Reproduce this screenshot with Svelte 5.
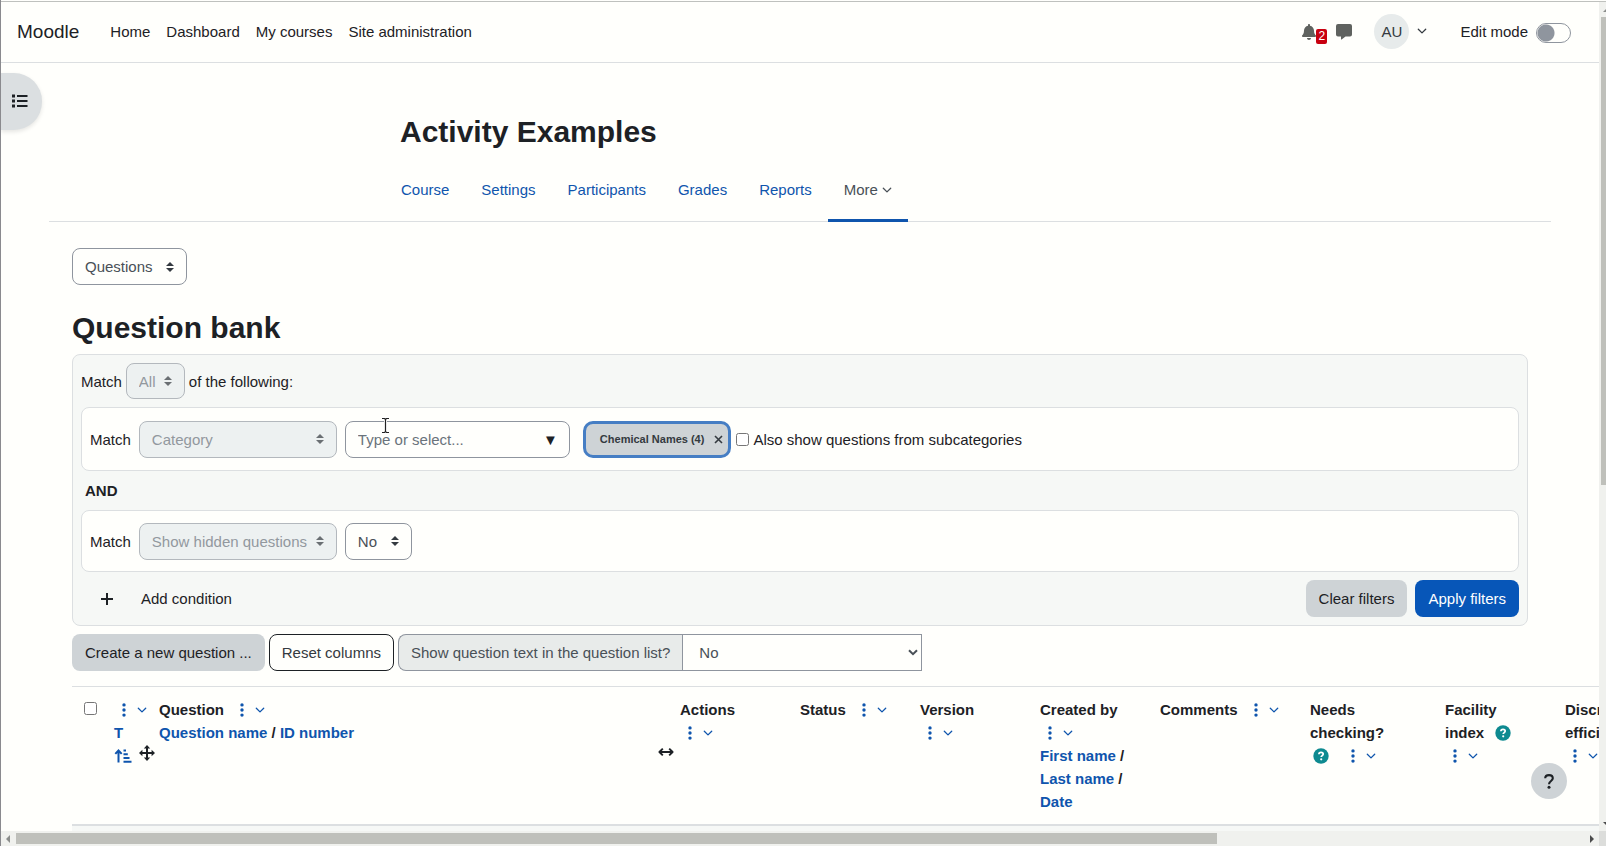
<script>
  const nav = ['Home', 'Dashboard', 'My courses', 'Site administration'];
  const tabs = ['Course', 'Settings', 'Participants', 'Grades', 'Reports'];

  // Each heading is a list of lines; each line is a list of parts.
  const t = (text) => ({ kind: 'text', text });
  const link = (text) => ({ kind: 'link', text });
  const menu = { kind: 'menu' };
  const help = { kind: 'help' };

  const columns = [
    { id: 'type', width: 45, lines: [[menu], [link('T')], [{ kind: 'sort' }]], move: true },
    {
      id: 'question',
      width: 521,
      lines: [[t('Question'), menu], [{ kind: 'links', items: ['Question name', 'ID number'] }]],
      resize: true
    },
    { id: 'actions', width: 120, lines: [[t('Actions')], [menu]] },
    { id: 'status', width: 120, lines: [[t('Status'), menu]] },
    { id: 'version', width: 120, lines: [[t('Version')], [menu]] },
    {
      id: 'created',
      width: 120,
      lines: [
        [t('Created by')],
        [menu],
        [{ kind: 'links', items: ['First name', ''] }],
        [{ kind: 'links', items: ['Last name', ''] }],
        [link('Date')]
      ]
    },
    { id: 'comments', width: 150, lines: [[t('Comments'), menu]] },
    { id: 'needs', width: 135, lines: [[t('Needs')], [t('checking?')], [help, menu]] },
    { id: 'facility', width: 120, lines: [[t('Facility')], [t('index'), help], [menu]] },
    { id: 'discr', width: 120, lines: [[t('Discriminative')], [t('efficiency'), help], [menu]] }
  ];
</script>

{#snippet chevron(cls)}
  <svg class={cls} width="10" height="10" viewBox="0 0 10 10" aria-hidden="true">
    <path d="M1.3 3.2 5 6.9 8.7 3.2" fill="none" stroke="currentColor" stroke-width="1.3" stroke-linecap="round" stroke-linejoin="round" />
  </svg>
{/snippet}

{#snippet picker(label, options, disabled, cls)}
  <span class="picker {cls}" class:off={disabled}>
    <select aria-label={label} {disabled}>
      {#each options as o}<option>{o}</option>{/each}
    </select>
    <svg width="8" height="10" viewBox="0 0 8 10" aria-hidden="true">
      <path d="M4 0 8 4H0zM4 10 8 6H0z" fill="currentColor" />
    </svg>
  </span>
{/snippet}

<div class="window">
  <div class="view">
    <header>
      <a class="brand" href="#home">Moodle</a>
      <nav aria-label="Site">
        {#each nav as item}<a href="#{item}">{item}</a>{/each}
      </nav>
      <div class="tools">
        <button class="plain bell" aria-label="Notifications, 2 unread">
          <svg width="14" height="16" viewBox="0 0 448 512" aria-hidden="true">
            <path fill="currentColor" d="M224 512c35.3 0 64-28.6 64-64H160c0 35.400 28.700 64 64 64zM439.400 362.300c-19.300-20.800-55.500-52-55.500-154.300 0-77.700-54.500-139.900-127.900-155.200V32c0-17.700-14.300-32-32-32s-32 14.300-32 32v20.800C118.600 68.100 64.100 130.300 64.100 208c0 102.300-36.200 133.500-55.500 154.300C2.600 368.700 0 376.400 0 384c.1 16.400 13 32 32.100 32h383.800c19.100 0 32-15.600 32.100-32 0-7.600-2.600-15.300-8.600-21.700z" />
          </svg>
          <span class="count">2</span>
        </button>
        <button class="plain chat" aria-label="Messages">
          <svg width="16" height="16" viewBox="0 0 16 16" aria-hidden="true">
            <path fill="currentColor" d="M2 0h12a2 2 0 0 1 2 2v8.500a2 2 0 0 1-2 2H9.500L5.600 15.500c-.3.200-.6 0-.6-.3v-2.700H2a2 2 0 0 1-2-2V2a2 2 0 0 1 2-2z" />
          </svg>
        </button>
        <button class="plain user" aria-label="User menu">
          <span class="avatar">AU</span>
          {@render chevron('')}
        </button>
        <label class="edit">Edit mode <input type="checkbox" role="switch" /></label>
      </div>
    </header>

    <button class="drawer" aria-label="Open course index">
      <svg width="16" height="14" viewBox="0 0 16 14" aria-hidden="true">
        <path fill="currentColor" d="M0 .5h3v3H0zM0 5.500h3v3H0zM0 10.500h3v3H0zM5 1h10.500v2H5zM5 6h10.500v2H5zM5 11h10.500v2H5z" />
      </svg>
    </button>

    <main>
      <div class="course">
        <div class="narrow">
          <h1>Activity Examples</h1>
          <nav class="tabs" aria-label="Course">
            {#each tabs as tab}<a href="#{tab}">{tab}</a>{/each}
            <a class="active" href="#more">More {@render chevron('')}</a>
          </nav>
        </div>
      </div>

      <div class="content">
        {@render picker('Question bank navigation', ['Questions'], false, 'jump')}
        <h2>Question bank</h2>

        <section class="filters" aria-label="Filters">
          <div class="join">
            Match {@render picker('Join type', ['All'], true, 'all')} of the following:
          </div>
          <div class="rule first">
            <span class="match">Match</span>
            {@render picker('Filter', ['Category'], true, 'type')}
            <span class="combo">
              <input type="text" placeholder="Type or select..." aria-label="Category" />
              <span class="down" aria-hidden="true">▼</span>
            </span>
            <button class="chip">Chemical Names (4)
              <svg width="9" height="9" viewBox="0 0 9 9" aria-hidden="true">
                <path d="M1 1l7 7M8 1 1 8" stroke="currentColor" stroke-width="1.6" />
              </svg>
            </button>
            <label class="sub"><input type="checkbox" />Also show questions from subcategories</label>
          </div>
          <div class="and">AND</div>
          <div class="rule">
            <span class="match">Match</span>
            {@render picker('Filter', ['Show hidden questions'], true, 'type')}
            {@render picker('Show hidden questions', ['No'], false, 'no')}
          </div>
          <div class="foot">
            <button class="plain add">
              <svg width="12" height="12" viewBox="0 0 12 12" aria-hidden="true">
                <path d="M6 0v12M0 6h12" stroke="currentColor" stroke-width="2" />
              </svg>
              Add condition
            </button>
            <span class="actions">
              <button class="btn grey">Clear filters</button>
              <button class="btn blue">Apply filters</button>
            </span>
          </div>
        </section>

        <div class="bar">
          <button class="btn grey">Create a new question ...</button>
          <button class="btn line">Reset columns</button>
          <div class="group">
            <label for="qtext">Show question text in the question list?</label>
            <span class="long">
              <select id="qtext"><option>No</option></select>
              <svg width="10" height="7" viewBox="0 0 10 7" aria-hidden="true">
                <path d="M1 1.200 5 5.200 9 1.200" fill="none" stroke="currentColor" stroke-width="2" />
              </svg>
            </span>
          </div>
        </div>

        <table>
          <colgroup>
            <col style="width:30px" />
            {#each columns as c}<col style="width:{c.width}px" />{/each}
          </colgroup>
          <thead>
            <tr>
              <th class="check"><input type="checkbox" aria-label="Select all" /></th>
              {#each columns as c (c.id)}
                <th>
                  {#each c.lines as line}
                    <div class="ln">
                      {#each line as p}
                        {#if p.kind === 'text'}
                          <span>{p.text}</span>
                        {:else if p.kind === 'link'}
                          <a href="#sort">{p.text}</a>
                        {:else if p.kind === 'links'}
                          <span><a href="#sort">{p.items[0]}</a> / {#if p.items[1]}<a href="#sort">{p.items[1]}</a>{/if}</span>
                        {:else if p.kind === 'menu'}
                          <button class="plain menu" aria-label="Column actions">
                            <svg width="4" height="14" viewBox="0 0 4 14" aria-hidden="true">
                              <path fill="currentColor" d="M2 .2a1.700 1.700 0 1 1 0 3.400 1.700 1.700 0 0 1 0-3.400zM2 5.300a1.700 1.700 0 1 1 0 3.400 1.700 1.700 0 0 1 0-3.400zM2 10.400a1.700 1.700 0 1 1 0 3.400 1.700 1.700 0 0 1 0-3.400z" />
                            </svg>
                            {@render chevron('')}
                          </button>
                        {:else if p.kind === 'help'}
                          <button class="plain help" aria-label="Help">
                            <svg width="16" height="16" viewBox="0 0 16 16" aria-hidden="true">
                              <circle cx="8" cy="8" r="7.700" fill="#0e8a90" />
                              <path d="M5.900 6.200C5.900 5 6.800 4.300 8 4.300s2.200.7 2.200 1.800c0 1.500-2 1.500-2 3" fill="none" stroke="#fff" stroke-width="1.700" />
                              <circle cx="8.200" cy="11.300" r="1.100" fill="#fff" />
                            </svg>
                          </button>
                        {:else}
                          <a href="#sort" class="sort" aria-label="Sort ascending">
                            <svg width="18" height="14" viewBox="0 0 18 14" aria-hidden="true">
                              <path d="M4.500 13.500V2M1.300 4.900 4.500 1.500 7.700 4.900" fill="none" stroke="currentColor" stroke-width="2" />
                              <path d="M9.500 1.500h2.500M9.500 5.200h4.300M9.500 8.900h6M9.500 12.700h8" stroke="currentColor" stroke-width="2" />
                            </svg>
                          </a>
                        {/if}
                      {/each}
                    </div>
                  {/each}
                  {#if c.move}
                    <svg class="handle move" width="16" height="16" viewBox="0 0 16 16" aria-hidden="true">
                      <path d="M8 2v12M2 8h12" stroke="currentColor" stroke-width="2" />
                      <path d="M8 0l3.200 3.400H4.800zM8 16l3.200-3.400H4.800zM0 8l3.400-3.200v6.400zM16 8l-3.400-3.200v6.400z" fill="currentColor" />
                    </svg>
                  {/if}
                  {#if c.resize}
                    <svg class="handle resize" width="16" height="10" viewBox="0 0 16 10" aria-hidden="true">
                      <path d="M1.500 5h13M4.800 1.600 1.400 5l3.400 3.400M11.200 1.600 14.600 5l-3.400 3.400" fill="none" stroke="currentColor" stroke-width="1.900" stroke-linejoin="round" />
                    </svg>
                  {/if}
                </th>
              {/each}
            </tr>
          </thead>
          <tbody>
            <tr><td colspan="11"></td></tr>
          </tbody>
        </table>
      </div>
    </main>

    <button class="plain ask" aria-label="Show footer">
      <svg width="10" height="15" viewBox="0 0 10 15" aria-hidden="true">
        <path d="M1.200 4.300C1.200 2.300 2.700 1.100 5 1.100s3.800 1.200 3.800 3.200C8.800 6.900 5 7.100 5 10.200" fill="none" stroke="currentColor" stroke-width="2.100" />
        <circle cx="5" cy="13.300" r="1.500" fill="currentColor" />
      </svg>
    </button>

    <svg class="caret" width="9" height="17" viewBox="0 0 9 17" aria-hidden="true">
      <path d="M1 1.500h2.500l1 1 1-1H8M4.500 2.500v12M1 15.500h2.500l1-1 1 1H8" fill="none" stroke="#fff" stroke-width="3" />
      <path d="M1 1.500h2.500l1 1 1-1H8M4.500 2.500v12M1 15.500h2.500l1-1 1 1H8" fill="none" stroke="#222" stroke-width="1.200" />
    </svg>
  </div>

  <div class="vbar" aria-hidden="true">
    <i class="up"></i><div class="track"><div class="thumb" style="height:58.6%"></div></div><i class="dn"></i>
  </div>
  <div class="hbar" aria-hidden="true">
    <i class="lf"></i><div class="track"><div class="thumb" style="width:76.6%"></div></div><i class="rt"></i>
  </div>
  <div class="corner"></div>
</div>

<style>
  :global(body) {
    background: #fffffc;
    overflow: hidden;
  }
  * {
    box-sizing: border-box;
  }
  .window {
    display: grid;
    grid-template: minmax(0, 1fr) 15px / minmax(0, 1fr) 7px;
    height: 100vh;
    padding-top: 1px;
    border-left: 1px solid #8a8a8e;
    background: #fffffc;
    color: #1d2125;
    font: 15px/23px 'Liberation Sans', Arial, sans-serif;
  }
  .view {
    position: relative;
    overflow: hidden;
    border-top: 1px solid #bfc1be;
  }
  a {
    color: #0f55ad;
    text-decoration: none;
  }
  button,
  input,
  select {
    font: inherit;
    color: inherit;
    margin: 0;
  }
  svg {
    flex: none;
    display: block;
  }
  .plain {
    display: inline-flex;
    align-items: center;
    padding: 0;
    border: 0;
    background: none;
  }
  header {
    display: flex;
    align-items: center;
    height: 61px;
    padding: 0 28px 2px 16px;
    border-bottom: 1px solid #dcdfe1;
  }
  header a {
    color: #1d2125;
  }
  .brand {
    font-size: 19px;
    margin-right: 31px;
  }
  header nav {
    display: flex;
    gap: 16px;
  }
  .tools {
    display: flex;
    align-items: center;
    margin-left: auto;
  }
  .bell,
  .chat {
    color: #5f625f;
    padding-top: 2px;
  }
  .count {
    align-self: end;
    margin-top: 8px;
    padding: 0 2px;
    border-radius: 2px;
    background: #c8000f;
    color: #fff;
    font-size: 12px;
    line-height: 15px;
    width: 11px;
  }
  .chat {
    margin-left: 9px;
  }
  .user {
    gap: 8px;
    margin-left: 22px;
    color: #343a40;
  }
  .avatar {
    width: 35px;
    border-radius: 50%;
    background: #e7ebeb;
    line-height: 35px;
    text-align: center;
  }
  .edit {
    display: flex;
    align-items: center;
    gap: 8px;
    margin-left: 33px;
  }
  .edit input {
    appearance: none;
    width: 35px;
    height: 20px;
    margin-top: 4px;
    border: 1px solid #8f959e;
    border-radius: 10px;
    background: radial-gradient(circle at 9px 9px, #8f959e 8px, transparent 9px);
  }
  .drawer {
    position: absolute;
    top: 71px;
    left: 0;
    display: flex;
    align-items: center;
    width: 41px;
    height: 57px;
    padding: 0 0 2px 11px;
    border: 0;
    border-radius: 0 28px 28px 0;
    background: #dbdfe1;
    box-shadow: 0 2px 4px rgba(0, 0, 0, 0.1);
  }
  .course {
    margin: 0 48px;
    border-bottom: 1px solid #dcdfe1;
  }
  .narrow {
    max-width: 830px;
    margin: 0 auto;
    padding: 48px 0 0 15px;
  }
  h1,
  h2 {
    margin: 0;
    font-size: 30px;
    line-height: 36px;
  }
  h1 {
    padding: 3px 0 0;
  }
  .tabs {
    display: flex;
    margin: 12px 0 -1px -15px;
  }
  .tabs a {
    display: flex;
    align-items: center;
    gap: 4px;
    padding: 16px 16px 18px;
    border-bottom: 3px solid transparent;
  }
  .tabs .active {
    border-color: #0f55ad;
    color: #495057;
  }
  .content {
    padding: 26px 71px 0;
  }
  .picker {
    display: inline-grid;
    align-items: center;
    height: 37px;
    color: #343a40;
  }
  .picker select,
  .picker svg {
    grid-area: 1 / 1;
  }
  .picker svg {
    justify-self: end;
    margin-right: 13px;
    pointer-events: none;
  }
  .picker select {
    appearance: none;
    width: 100%;
    height: 100%;
    padding: 0 26px 0 12px;
    border: 1px solid #8f959e;
    border-radius: 8px;
    background: transparent;
    color: #495057;
    opacity: 1;
  }
  .off {
    color: #6a6f73;
  }
  .off select {
    border-color: #b3b8bd;
    background: #edf1f1;
    color: #92989e;
  }
  .jump {
    width: 115px;
  }
  .all {
    width: 59px;
    height: 36px;
    margin: 0 4px;
  }
  .type {
    width: 198px;
  }
  .no {
    width: 67px;
  }
  h2 {
    margin: 25px 0 8px;
  }
  .filters {
    padding: 8px;
    border: 1px solid #dcdfe1;
    border-radius: 8px;
    background: #f6f8f6;
  }
  .join {
    display: flex;
    align-items: center;
  }
  .rule {
    display: flex;
    align-items: center;
    gap: 8px;
    min-height: 62px;
    padding: 8px;
    border: 1px solid #dcdfe1;
    border-radius: 8px;
    background: #fffffc;
  }
  .first {
    margin-top: 8px;
    min-height: 64px;
  }
  .and {
    padding: 8px 4px;
    font-weight: bold;
  }
  .combo {
    display: grid;
    align-items: center;
    width: 225px;
    height: 37px;
  }
  .combo > * {
    grid-area: 1 / 1;
  }
  .combo input {
    width: 100%;
    height: 100%;
    padding: 0 40px 0 12px;
    border: 1px solid #8f959e;
    border-radius: 8px;
    background: transparent;
  }
  .combo input::placeholder {
    color: #6a737b;
  }
  .down {
    justify-self: end;
    margin-right: 12px;
  }
  .chip {
    display: flex;
    align-items: center;
    gap: 10px;
    height: 37px;
    margin-left: 5px;
    padding: 0 5px 0 14px;
    border: 3px solid #467ec4;
    border-radius: 10px;
    background: #ced3d6;
    color: #343a40;
    font-size: 11px;
    font-weight: bold;
  }
  .sub {
    display: flex;
    align-items: center;
    gap: 4px;
    margin-left: -3px;
  }
  input[type='checkbox']:not([role]) {
    width: 13px;
    height: 13px;
  }
  .foot {
    display: flex;
    align-items: center;
    justify-content: space-between;
    margin-top: 8px;
  }
  .add {
    gap: 28px;
    margin-left: 20px;
  }
  .actions {
    display: flex;
    gap: 8px;
  }
  .btn {
    height: 37px;
    padding: 0 12px;
    border: 1px solid transparent;
    border-radius: 8px;
  }
  .grey {
    background: #ced3d6;
  }
  .blue {
    background: #0756b8;
    color: #fff;
  }
  .line {
    border-color: #1d2125;
    background: none;
    color: #343a40;
  }
  .bar {
    display: flex;
    gap: 4px;
    margin: 8px 0 15px;
  }
  .group {
    display: flex;
    color: #495057;
  }
  .group label {
    padding: 0 12px;
    border: 1px solid #8f959e;
    border-right: 0;
    border-radius: 8px 0 0 8px;
    background: #e8ebea;
    line-height: 35px;
  }
  .long {
    display: grid;
    align-items: center;
    width: 240px;
  }
  .long select,
  .long svg {
    grid-area: 1 / 1;
  }
  .long select {
    appearance: none;
    width: 100%;
    height: 100%;
    padding: 0 16px;
    border: 1px solid #8f959e;
    border-radius: 0;
    background: transparent;
  }
  .long svg {
    justify-self: end;
    margin-right: 4px;
    pointer-events: none;
  }
  table {
    width: 1581px;
    table-layout: fixed;
    border-collapse: collapse;
  }
  th {
    position: relative;
    padding: 11px 0 11px 12px;
    border-top: 1px solid #dcdfe1;
    border-bottom: 2px solid #dcdfe1;
    text-align: left;
    vertical-align: top;
    white-space: nowrap;
  }
  td {
    height: 40px;
    background: #f6f8f6;
  }
  .check input {
    display: block;
    margin-top: 4px;
  }
  .ln {
    display: flex;
    align-items: center;
    gap: 8px;
    height: 23px;
  }
  .menu {
    gap: 11px;
    padding-left: 8px;
    color: #0f55ad;
  }
  .help {
    padding: 0 6px 0 3px;
  }
  .handle {
    position: absolute;
    z-index: 1;
    color: #1d2125;
  }
  .move {
    top: 58px;
    right: -8px;
  }
  .resize {
    top: 60px;
    right: -6px;
  }
  .ask {
    position: absolute;
    right: 32px;
    bottom: 32px;
    z-index: 2;
    justify-content: center;
    width: 36px;
    height: 36px;
    border-radius: 50%;
    background: #ced3d6;
  }
  .caret {
    position: absolute;
    top: 415px;
    left: 380px;
  }
  .vbar,
  .hbar {
    display: flex;
    background: #f0f1ee;
    overflow: hidden;
  }
  .vbar {
    flex-direction: column;
    border-top: 1px solid #bfc1be;
  }
  .track {
    flex: 1;
  }
  .thumb {
    background: #bfc0bb;
  }
  .vbar .thumb {
    margin-left: 2px;
  }
  .hbar .thumb {
    height: 11px;
    margin-top: 2px;
  }
  i {
    width: 15px;
    height: 15px;
    flex: none;
    background: #4a4b4b;
  }
  .up {
    background: #8b8d8b;
    clip-path: polygon(4px 10px, 8px 6px, 12px 10px);
  }
  .dn {
    clip-path: polygon(4px 6px, 8px 10px, 12px 6px);
  }
  .lf {
    background: #8b8d8b;
    clip-path: polygon(9px 4px, 5px 8px, 9px 12px);
  }
  .rt {
    clip-path: polygon(6px 4px, 10px 8px, 6px 12px);
  }
  .corner {
    background: #dcdddb;
  }
</style>
